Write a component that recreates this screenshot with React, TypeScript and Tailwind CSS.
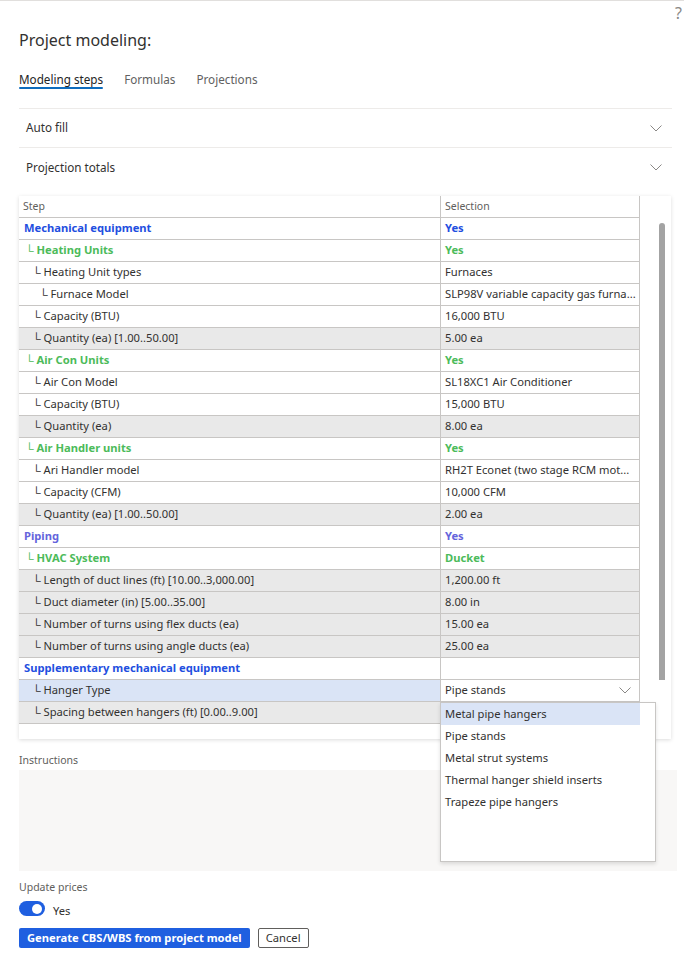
import React from 'react';

type Row = {
  step: string;
  value: string;
  level: number;
  kind: 'group' | 'sub' | 'piping' | 'item';
  shaded?: boolean;
  selected?: boolean;
};

const ROWS: Row[] = [
  { step: 'Mechanical equipment', value: 'Yes', level: 0, kind: 'group' },
  { step: 'Heating Units', value: 'Yes', level: 1, kind: 'sub' },
  { step: 'Heating Unit types', value: 'Furnaces', level: 2, kind: 'item' },
  { step: 'Furnace Model', value: 'SLP98V variable capacity gas furna...', level: 3, kind: 'item' },
  { step: 'Capacity (BTU)', value: '16,000 BTU', level: 2, kind: 'item' },
  { step: 'Quantity (ea) [1.00..50.00]', value: '5.00 ea', level: 2, kind: 'item', shaded: true },
  { step: 'Air Con Units', value: 'Yes', level: 1, kind: 'sub' },
  { step: 'Air Con Model', value: 'SL18XC1 Air Conditioner', level: 2, kind: 'item' },
  { step: 'Capacity (BTU)', value: '15,000 BTU', level: 2, kind: 'item' },
  { step: 'Quantity (ea)', value: '8.00 ea', level: 2, kind: 'item', shaded: true },
  { step: 'Air Handler units', value: 'Yes', level: 1, kind: 'sub' },
  { step: 'Ari Handler model', value: 'RH2T Econet (two stage RCM mot...', level: 2, kind: 'item' },
  { step: 'Capacity (CFM)', value: '10,000 CFM', level: 2, kind: 'item' },
  { step: 'Quantity (ea) [1.00..50.00]', value: '2.00 ea', level: 2, kind: 'item', shaded: true },
  { step: 'Piping', value: 'Yes', level: 0, kind: 'piping' },
  { step: 'HVAC System', value: 'Ducket', level: 1, kind: 'sub' },
  { step: 'Length of duct lines (ft) [10.00..3,000.00]', value: '1,200.00 ft', level: 2, kind: 'item', shaded: true },
  { step: 'Duct diameter (in) [5.00..35.00]', value: '8.00 in', level: 2, kind: 'item', shaded: true },
  { step: 'Number of turns using flex ducts (ea)', value: '15.00 ea', level: 2, kind: 'item', shaded: true },
  { step: 'Number of turns using angle ducts (ea)', value: '25.00 ea', level: 2, kind: 'item', shaded: true },
  { step: 'Supplementary mechanical equipment', value: '', level: 0, kind: 'group' },
  { step: 'Hanger Type', value: 'Pipe stands', level: 2, kind: 'item', selected: true },
  { step: 'Spacing between hangers (ft) [0.00..9.00]', value: '', level: 2, kind: 'item', shaded: true },
];

const OPTIONS = [
  'Metal pipe hangers',
  'Pipe stands',
  'Metal strut systems',
  'Thermal hanger shield inserts',
  'Trapeze pipe hangers',
];

const textColor = (kind: Row['kind']) => {
  if (kind === 'group') return 'text-[#1f4fe0] font-bold';
  if (kind === 'sub') return 'text-[#4cbb5a] font-bold';
  if (kind === 'piping') return 'text-[#6464dc] font-bold';
  return 'text-[#323130]';
};

const indent = (level: number) => {
  if (level === 1) return 'pl-[6px]';
  if (level === 2) return 'pl-[13px]';
  if (level === 3) return 'pl-[20px]';
  return 'pl-[5px]';
};

const Chevron = ({ className = '' }: { className?: string }) => (
  <svg width="12" height="7" viewBox="0 0 12 7" className={className}>
    <path d="M0.5 0.5 L6 6 L11.5 0.5" fill="none" stroke="#8a8886" strokeWidth="1" />
  </svg>
);

export default function App() {
  return (
    <div
      className="relative w-[684px] h-[956px] bg-white border-t border-[#e1dfdd] text-[#323130] overflow-hidden"
      style={{ fontFamily: '"Noto Sans", "Open Sans", sans-serif' }}
    >
      <div className="absolute right-[2px] top-[4px] text-[16px] text-[#8a8886] leading-none">?</div>

      <div className="pl-[19px] pr-[12px]">
        {/* Title */}
        <div className="pt-[27px] text-[16px] leading-[24px]">Project modeling:</div>

        {/* Tabs */}
        <div className="mt-[19px] flex gap-[21px] text-[11.7px] leading-[16px]">
          <div className="flex flex-col">
            <span className="text-[#242424]">Modeling steps</span>
            <div className="mt-0 h-[2px] bg-[#0f6cbd] rounded-full" />
          </div>
          <span className="text-[#616161]">Formulas</span>
          <span className="text-[#616161]">Projections</span>
        </div>

        {/* Accordion */}
        <div className="mt-[19px] border-t border-[#edebe9] w-[653px]">
          <div className="h-[39px] flex items-center justify-between pl-[7px] pr-[10px] border-b border-[#edebe9] text-[11.7px]">
            <span>Auto fill</span>
            <Chevron />
          </div>
          <div className="h-[39px] flex items-center justify-between pl-[7px] pr-[10px] text-[11.7px]">
            <span>Projection totals</span>
            <Chevron />
          </div>
        </div>

        {/* Table card */}
        <div className="relative mt-[9px] w-[652px] h-[543px] bg-white shadow-[0_1px_4px_rgba(0,0,0,0.14)]">
          <div className="flex">
            <div className="w-[621px] shrink-0 text-[11.2px]">
              <div className="flex h-[22px] border-b border-[#c8c6c4] text-[10.5px] text-[#605e5c]">
                <div className="w-[421px] shrink-0 flex items-center pl-[4px]">Step</div>
                <div className="w-[200px] shrink-0 flex items-center pl-[4px] border-l border-r border-[#c8c6c4]">Selection</div>
              </div>
              {ROWS.map((r, i) => (
                <div
                  key={i}
                  className={`flex h-[22px] border-b border-[#c8c6c4] ${r.shaded ? 'bg-[#e9e9e9]' : 'bg-white'}`}
                >
                  <div
                    className={`w-[421px] shrink-0 overflow-hidden flex items-center whitespace-nowrap ${indent(r.level)} ${textColor(r.kind)} ${r.selected ? 'bg-[#dae4f6]' : ''}`}
                  >
                    {r.level > 0 && <span className="mr-[3px] text-[12px] font-normal">└</span>}
                    {r.step}
                  </div>
                  <div
                    className={`w-[200px] shrink-0 overflow-hidden flex items-center justify-between pl-[4px] pr-[8px] border-l border-r border-[#c8c6c4] whitespace-nowrap ${textColor(r.kind)} ${r.selected ? 'bg-white' : ''}`}
                  >
                    <span>{r.value}</span>
                    {r.selected && <Chevron />}
                  </div>
                </div>
              ))}
            </div>
            <div className="flex-1 flex justify-end pr-[6px] pt-[27px]">
              <div className="w-[6px] h-[457px] bg-[#a3a3a3] rounded-t-full" />
            </div>
          </div>

          {/* Dropdown */}
          <div className="absolute left-[421px] top-[506px] w-[216px] h-[160px] bg-white border border-[#c8c6c4] shadow-[0_2px_4px_rgba(0,0,0,0.12)] text-[11.2px] z-10">
            {OPTIONS.map((o, i) => (
              <div
                key={o}
                className={`h-[22px] flex items-center pl-[4px] w-[199px] ${i === 0 ? 'bg-[#dae4f6]' : ''}`}
              >
                {o}
              </div>
            ))}
          </div>
        </div>

        {/* Instructions */}
        <div className="mt-[14px] text-[10.5px] text-[#605e5c] leading-[14px]">Instructions</div>
        <div className="mt-[3px] w-[658px] h-[101px] bg-[#f8f7f6]" />

        {/* Update prices */}
        <div className="mt-[9px] text-[10.5px] text-[#605e5c] leading-[14px]">Update prices</div>
        <div className="mt-[4px] flex items-center gap-[8px]">
          <div className="w-[26px] h-[15px] rounded-full bg-[#1f5fe0] flex items-center justify-end pr-[3px]">
            <div className="w-[10px] h-[10px] rounded-full bg-white" />
          </div>
          <span className="text-[11.2px] mt-[5px]">Yes</span>
        </div>

        {/* Buttons */}
        <div className="mt-[8px] flex gap-[8px]">
          <button className="h-[20px] px-[8px] bg-[#1f5fe0] text-white text-[11.2px] font-bold rounded-[2px] leading-none">
            Generate CBS/WBS from project model
          </button>
          <button className="h-[20px] px-[7px] bg-white border border-[#605e5c] text-[11.2px] rounded-[2px] leading-none">
            Cancel
          </button>
        </div>
      </div>
    </div>
  );
}
